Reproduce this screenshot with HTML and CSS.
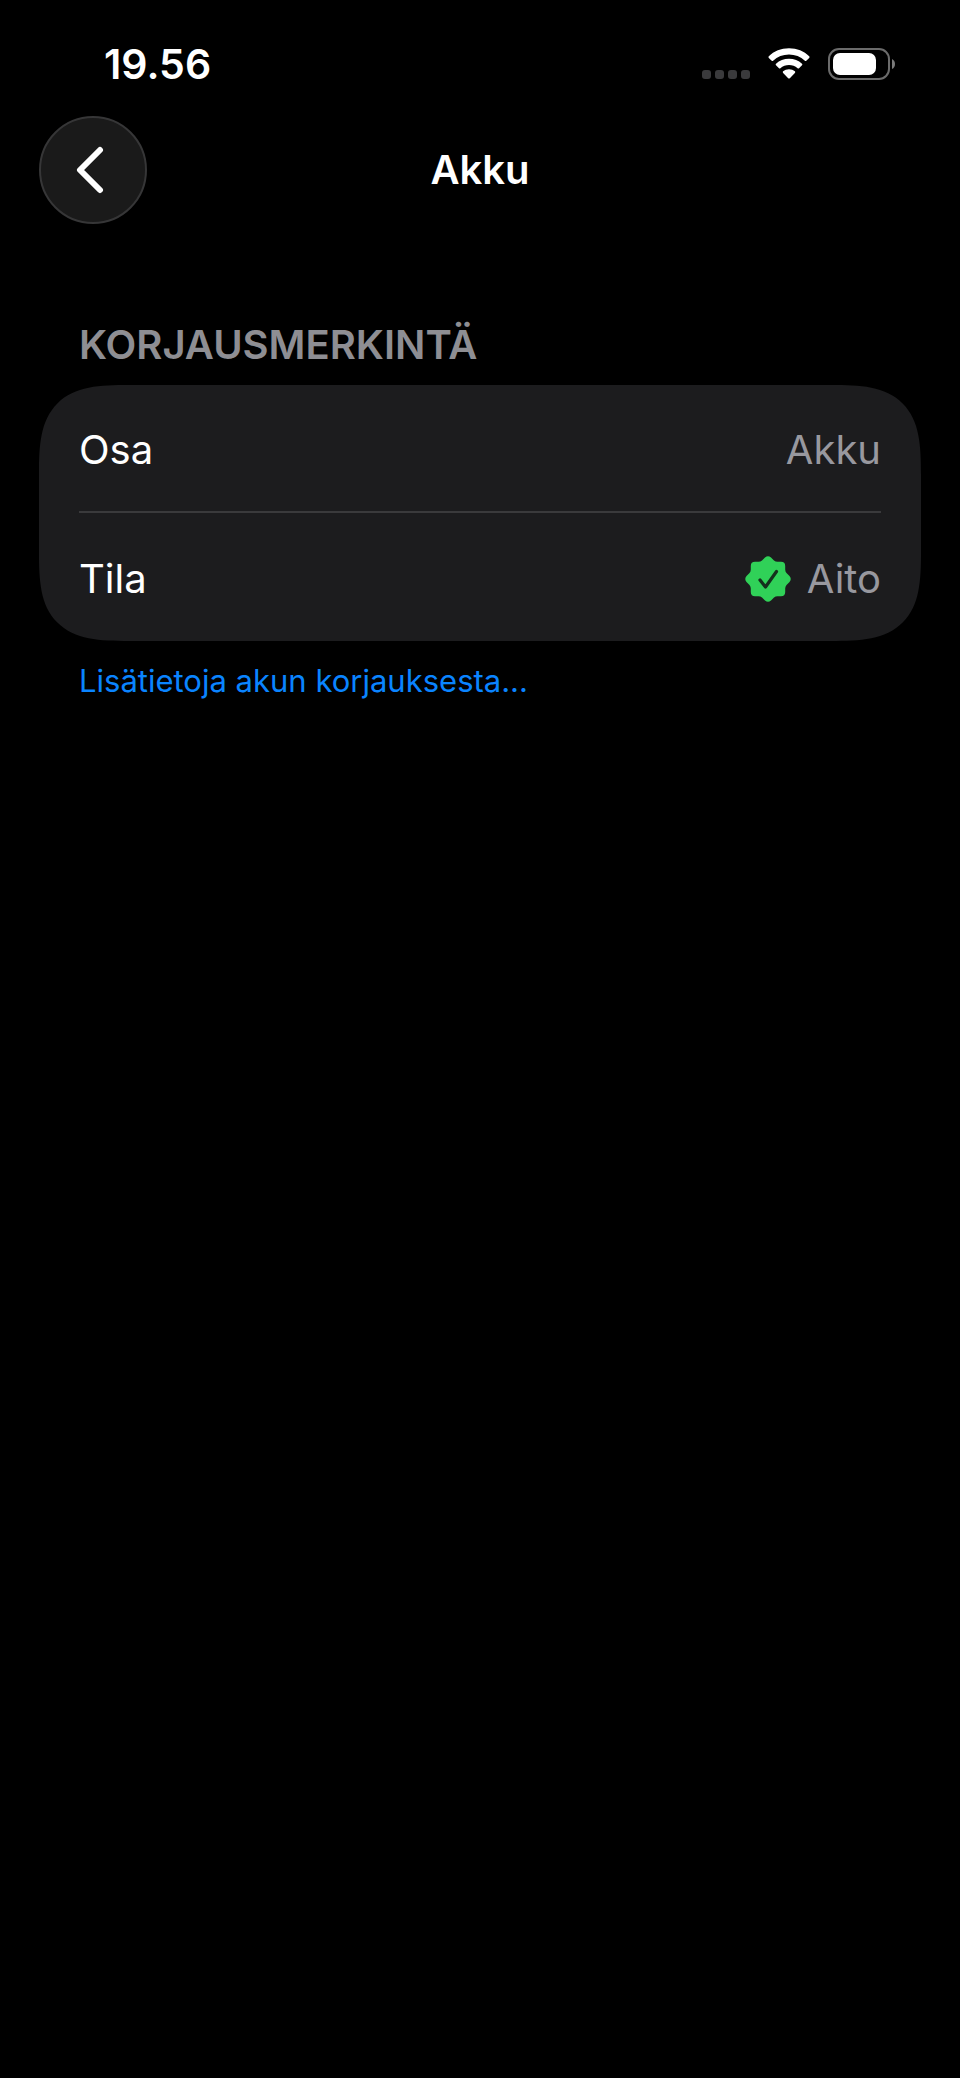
FILE: index.html
```html
<!DOCTYPE html>
<html lang="fi">
<head>
    <meta charset="UTF-8">
    <meta name="viewport" content="width=device-width, initial-scale=1.0">
    <title>Akku</title>
    <link rel="stylesheet" href="styles.css">
</head>
<body>
    <div class="status-bar">
        <time class="clock">19.56</time>
        <div class="status-icons">
            <svg class="signal" width="50" height="32" viewBox="0 0 50 32" fill="#3a3a3c" aria-hidden="true">
                <rect x="1" y="22" width="9" height="9" rx="3"/>
                <rect x="14" y="22" width="9" height="9" rx="3"/>
                <rect x="27" y="22" width="9" height="9" rx="3"/>
                <rect x="40" y="22" width="9" height="9" rx="3"/>
            </svg>
            <svg class="wifi" width="42" height="32" viewBox="0 0 42 32" fill="#fff" aria-hidden="true">
                <path d="M21 0.3C29 0.3 36 3.2 41.2 8.3Q42 9.1 41.2 9.9L38.3 12.8Q37.6 13.4 36.9 12.8C32.6 8.7 27 6.5 21 6.5S9.4 8.7 5.1 12.8Q4.4 13.4 3.7 12.8L0.8 9.9Q0 9.1 0.8 8.3C6 3.2 13 0.3 21 0.3Z"/>
                <path d="M21 10.8C26 10.8 30.6 12.6 34 15.7Q34.8 16.5 34 17.3L31 20.2Q30.4 20.8 29.6 20.2C27.2 18.2 24.2 17 21 17S14.8 18.2 12.4 20.2Q11.6 20.8 11 20.2L8 17.3Q7.2 16.5 8 15.7C11.4 12.6 16 10.8 21 10.8Z"/>
                <path d="M21 21.3C23.3 21.3 25.3 22 26.9 23.3Q27.7 24.1 26.9 24.9L21.8 30.2Q21 31 20.2 30.2L15.1 24.9Q14.3 24.1 15.1 23.3C16.7 22 18.7 21.3 21 21.3Z"/>
            </svg>
            <svg class="battery" width="68" height="32" viewBox="0 0 68 32" aria-hidden="true">
                <rect x="1" y="1" width="60" height="30" rx="10" fill="none" stroke="#6b6b6b" stroke-width="2"/>
                <rect x="5" y="5" width="43" height="22" rx="7" fill="#fff"/>
                <path d="M64 11Q67 12.5 67 16T64 21Z" fill="#7a7a7a"/>
            </svg>
        </div>
    </div>

    <header class="nav-bar">
        <button class="back-btn" type="button" aria-label="Takaisin">
            <svg width="28" height="48" viewBox="0 0 28 48" aria-hidden="true">
                <path d="M24 4L4 24L24 44" fill="none" stroke="#fff" stroke-width="6" stroke-linecap="round" stroke-linejoin="round"/>
            </svg>
        </button>
        <h1>Akku</h1>
    </header>

    <main class="content">
        <h2>KORJAUSMERKINTÄ</h2>
        <dl class="card">
            <div class="row">
                <dt>Osa</dt>
                <dd>Akku</dd>
            </div>
            <div class="row">
                <dt>Tila</dt>
                <dd>
                    <svg width="46" height="46" viewBox="0 0 46 46" aria-hidden="true">
                        <path d="M20 1.5Q23 -1 26 1.5L29 4.5Q30.5 5.8 32.5 5.8H36Q40.2 5.8 40.2 10V13.5Q40.2 15.5 41.5 17L44.5 20Q47 23 44.5 26L41.5 29Q40.2 30.5 40.2 32.5V36Q40.2 40.2 36 40.2H32.5Q30.5 40.2 29 41.5L26 44.5Q23 47 20 44.5L17 41.5Q15.5 40.2 13.5 40.2H10Q5.8 40.2 5.8 36V32.5Q5.8 30.5 4.5 29L1.5 26Q-1 23 1.5 20L4.5 17Q5.8 15.5 5.8 13.5V10Q5.8 5.8 10 5.8H13.5Q15.5 5.8 17 4.5Z" fill="#30d158"/>
                        <path d="M15 24L20.500 31L31.500 15.500" fill="none" stroke="#14301c" stroke-width="3.2" stroke-linecap="round" stroke-linejoin="round"/>
                    </svg>
                    Aito
                </dd>
            </div>
        </dl>
        <a class="more" href="#">Lisätietoja akun korjauksesta...</a>
    </main>
</body>
</html>
```

FILE: styles.css
```css
* {
    box-sizing: border-box;
}
body {
    margin: 0;
    background: #000;
    color: #fff;
    font-family: Inter, "Liberation Sans", sans-serif;
    font-size: 40px;
    line-height: 50px;
}
h1, h2, dl, dd {
    margin: 0;
}
.status-bar {
    display: flex;
    justify-content: space-between;
    align-items: center;
    padding: 39px 64px 27px 104px;
}
.clock {
    font-size: 41px;
    font-weight: 600;
}
.status-icons {
    display: flex;
    align-items: center;
}
.wifi {
    margin: 0 18px 0 17px;
}
.nav-bar {
    display: grid;
    grid-template-columns: 108px 1fr 108px;
    align-items: center;
    padding: 0 39px;
}
.back-btn {
    display: flex;
    align-items: center;
    justify-content: center;
    width: 108px;
    height: 108px;
    padding: 0 6px 0 0;
    border: 2px solid #363637;
    border-radius: 50%;
    background: #1a1a1a;
    cursor: pointer;
}
h1 {
    font-size: 40px;
    font-weight: 600;
    text-align: center;
}
.content {
    padding: 96px 39px 0;
}
h2 {
    padding: 0 40px;
    margin-bottom: 15px;
    color: #8e8e93;
    font-size: 40px;
    font-weight: 600;
}
.card {
    padding: 0 40px;
    border-radius: 78px;
    background: #1c1c1e;
}
@supports (corner-shape: squircle) {
    .card {
        border-radius: 90px;
        corner-shape: superellipse(1.6);
    }
}
.row {
    display: flex;
    justify-content: space-between;
    align-items: center;
    height: 128px;
    padding-top: 4px;
    border-bottom: 2px solid #3a3a3c;
}
.row:last-child {
    border-bottom: none;
}
.row dd {
    display: flex;
    align-items: center;
    gap: 16px;
    color: #98989f;
}
.more {
    display: block;
    padding: 15px 40px;
    color: #0a84ff;
    font-size: 31px;
    text-decoration: none;
}
```
